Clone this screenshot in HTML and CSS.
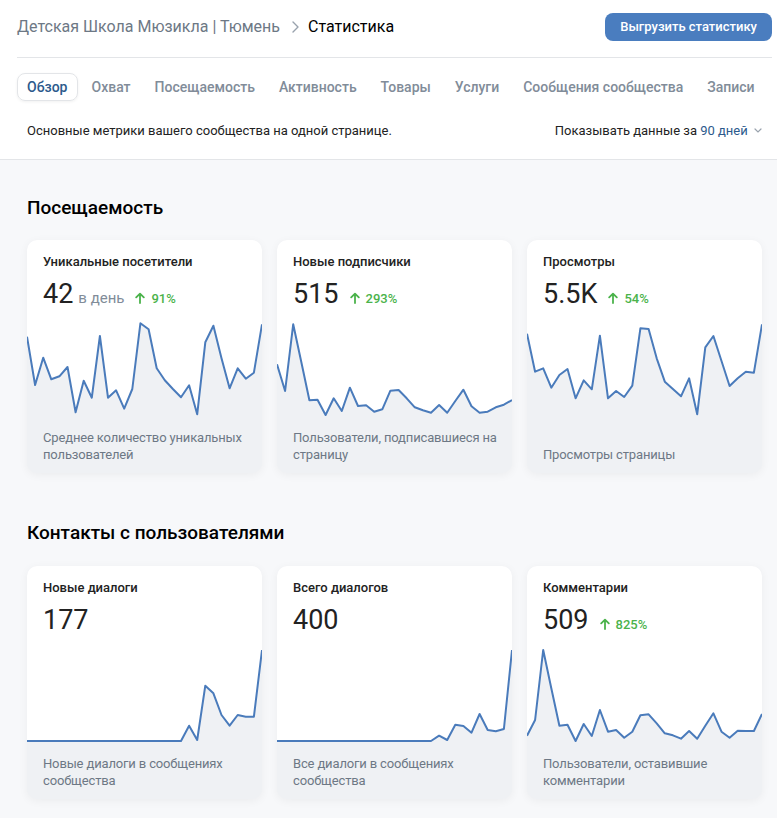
FILE: index.html
```html
<!DOCTYPE html>
<html>
	<head>
		<meta charset="utf-8">
		<title>Статистика</title>
		<link rel="stylesheet" href="styles.css">
	</head>
	<body>
		<div class="top">
			<div class="crumbs">
				<div class="path">
					<span class="group">Детская Школа Мюзикла | Тюмень</span>
					<svg class="sep" width="7" height="12" viewBox="0 0 7 12"><path d="M1 1l5 5-5 5" fill="none" stroke="#99a2ad" stroke-width="1.4" stroke-linecap="round" stroke-linejoin="round"/></svg>
					<span class="page">Статистика</span>
				</div>
				<a class="btn" href="#">Выгрузить статистику</a>
			</div>
			<ul class="tabs">
				<li class="on">Обзор</li>
				<li>Охват</li>
				<li>Посещаемость</li>
				<li>Активность</li>
				<li>Товары</li>
				<li>Услуги</li>
				<li>Сообщения сообщества</li>
				<li>Записи</li>
			</ul>
			<div class="about">
				<span>Основные метрики вашего сообщества на одной странице.</span>
				<span class="period">Показывать данные за <a href="#">90 дней</a>
					<svg width="8" height="5" viewBox="0 0 8 5"><path d="M1 1l3 3 3-3" fill="none" stroke="#99a2ad" stroke-width="1.2" stroke-linecap="round"/></svg>
				</span>
			</div>
		</div>

		<!--посещаемость-->
		<div class="section">
			<h2>Посещаемость</h2>
			<div class="cards">
				<div class="card">
					<div class="head">
						<div class="name">Уникальные посетители</div>
						<div class="value"><b>42</b><span class="unit">в день</span><span class="up">91%</span></div>
					</div>
					<svg class="chart" viewBox="0 0 235 115" data-v="26.7,75,47.7,69.3,66.3,57,102.3,70.7,87.7,26,87.7,80.3,98.7,79,13.3,19.3,58.3,70.3,79,87.3,75.3,104.3,32.3,15.7,48.3,78.3,58.3,68.7,62.7,14.3"></svg>
					<div class="desc">Среднее количество уникальных пользователей</div>
				</div>
				<div class="card">
					<div class="head">
						<div class="name">Новые подписчики</div>
						<div class="value"><b>515</b><span class="up">293%</span></div>
					</div>
					<svg class="chart" viewBox="0 0 235 115" data-v="54.3,81,14.3,52,90.3,89.7,105,88.3,101,77.7,96,95.3,101.7,99.3,80.7,80,88.3,97.3,100.3,102.7,95,102.7,91,79.7,96.3,102.7,101.7,97.3,94.7,90"></svg>
					<div class="desc">Пользователи, подписавшиеся на страницу</div>
				</div>
				<div class="card">
					<div class="head">
						<div class="name">Просмотры</div>
						<div class="value"><b>5.5K</b><span class="up">54%</span></div>
					</div>
					<svg class="chart" viewBox="0 0 235 115" data-v="23.7,61.7,58.3,77.7,65,59,88.3,70.3,79.3,25.7,88.3,81,87,75.7,18.3,19,48.3,71.7,79,86.3,68.3,104.3,37.3,26,51,76,68.3,61.7,62.7,14.3"></svg>
					<div class="desc">Просмотры страницы</div>
				</div>
			</div>
		</div>

		<!--контакты-->
		<div class="section">
			<h2>Контакты с пользователями</h2>
			<div class="cards">
				<div class="card">
					<div class="head">
						<div class="name">Новые диалоги</div>
						<div class="value"><b>177</b></div>
					</div>
					<svg class="chart" viewBox="0 0 235 115" data-v="105,105,105,105,105,105,105,105,105,105,105,105,105,105,105,105,105,105,105,105,89.7,104,49.7,57.3,79,89.7,79,80.7,80.7,14"></svg>
					<div class="desc">Новые диалоги в сообщениях сообщества</div>
				</div>
				<div class="card">
					<div class="head">
						<div class="name">Всего диалогов</div>
						<div class="value"><b>400</b></div>
					</div>
					<svg class="chart" viewBox="0 0 235 115" data-v="105,105,105,105,105,105,105,105,105,105,105,105,105,105,105,105,105,105,105,105,99.7,104,88.7,90,96.7,78,94,95.3,93,14"></svg>
					<div class="desc">Все диалоги в сообщениях сообщества</div>
				</div>
				<div class="card">
					<div class="head">
						<div class="name">Комментарии</div>
						<div class="value"><b>509</b><span class="up">825%</span></div>
					</div>
					<svg class="chart" viewBox="0 0 235 115" data-v="99.7,84,14,52.3,89.7,88.7,105,88,100,74,95.7,94,101.7,95.7,79.3,78.3,87.3,97.3,99.3,102.7,95,102.7,89.7,77.3,95.7,101.7,94.7,95,95,78"></svg>
					<div class="desc">Пользователи, оставившие комментарии</div>
				</div>
			</div>
		</div>

		<script>
		//рисуем графики
		var ns="http://www.w3.org/2000/svg";
		var charts=document.querySelectorAll(".chart");
		for(var i=0;i<charts.length;i++){
			var svg=charts[i];
			var vals=svg.getAttribute("data-v").split(",");
			var step=235/(vals.length-1);
			var pts=[];
			for(var j=0;j<vals.length;j++){
				pts.push((j*step).toFixed(1)+","+vals[j]);
			}
			//белая заливка над линией
			var fill=document.createElementNS(ns,"polygon");
			fill.setAttribute("points","0,0 "+pts.join(" ")+" 235,0");
			fill.setAttribute("fill","#fff");
			svg.appendChild(fill);
			var line=document.createElementNS(ns,"polyline");
			line.setAttribute("points",pts.join(" "));
			line.setAttribute("class","line");
			svg.appendChild(line);
		}
		//стрелки роста
		var ups=document.querySelectorAll(".up");
		for(var k=0;k<ups.length;k++){
			ups[k].innerHTML='<svg width="10" height="12" viewBox="0 0 10 12"><path d="M5 11V1.8M1.2 5.4L5 1.6l3.8 3.8" fill="none" stroke="#4bb34b" stroke-width="1.8" stroke-linecap="round" stroke-linejoin="round"/></svg>'+ups[k].innerHTML;
		}
		</script>
	</body>
</html>
```

FILE: styles.css
```css
  html,body{
	  margin: 0;
	  padding: 0;
  }
  body{
	  font-family: Roboto, "Noto Sans", "Liberation Sans", sans-serif;
	  background: #f7f8fa;
	  color: #000;
	  padding-bottom: 12px;
  }
  a{
	  text-decoration: none;
  }

  .top{
	  background: #fff;
	  border-bottom: #e3e5e8 solid 1px;
  }
  .crumbs{
	  margin: 0 5px 0 17px;
	  height: 57px;
	  border-bottom: #e3e5e8 solid 1px;
	  display: flex;
	  align-items: flex-start;
	  justify-content: space-between;
  }
  .path{
	  display: flex;
	  align-items: center;
	  font-size: 16px;
	  margin-top: 17px;
	  line-height: 20px;
  }
  .group{
	  color: #6d7885;
  }
  .sep{
	  margin: 0 9px 0 12px;
  }
  .btn{
	  margin-top: 13px;
	  height: 28px;
	  line-height: 28px;
	  padding: 0 15px;
	  border-radius: 8px;
	  background: #4a7dbf;
	  color: #fff;
	  font-size: 13px;
	  font-weight: 500;
  }

  .tabs{
	  list-style: none;
	  margin: 15px 0 0 17px;
	  padding: 0;
	  display: flex;
	  gap: 4px;
  }
  .tabs li{
	  height: 26px;
	  line-height: 26px;
	  padding: 0 9px;
	  border-radius: 8px;
	  font-size: 14px;
	  font-weight: 500;
	  color: #818c99;
	  border: transparent solid 1px;
	  white-space: nowrap;
  }
  .tabs li.on{
	  color: #2c5a8c;
	  border-color: #e3e5e8;
	  box-shadow: 0 1px 3px rgba(0,0,0,0.06);
  }

  .about{
	  display: flex;
	  justify-content: space-between;
	  align-items: center;
	  padding: 0 15px 0 27px;
	  height: 58px;
	  font-size: 13px;
	  color: #222;
  }
  .period a{
	  color: #2c5a8c;
  }
  .period svg{
	  margin-left: 3px;
	  vertical-align: 2px;
  }

  .section{
	  padding: 0 15px 0 27px;
  }
  .section h2{
	  margin: 0;
	  padding: 36px 0 20px;
	  font-size: 19px;
	  line-height: 24px;
	  font-weight: 500;
  }
  .section + .section h2{
	  padding-top: 48px;
	  padding-bottom: 21px;
  }
  .cards{
	  display: grid;
	  grid-template-columns: repeat(3, 235px);
	  gap: 15px;
  }
  .card{
	  height: 233px;
	  border-radius: 10px;
	  background: #eff1f4;
	  overflow: hidden;
	  display: flex;
	  flex-direction: column;
	  box-shadow: 0 2px 10px rgba(0,0,0,0.05);
  }
  .head{
	  background: #fff;
	  padding: 13px 16px 0;
  }
  .name{
	  font-size: 13px;
	  line-height: 17px;
	  font-weight: 500;
	  color: #222;
  }
  .value{
	  margin-top: 8px;
	  height: 32px;
	  line-height: 32px;
	  display: flex;
	  align-items: baseline;
  }
  .value b{
	  font-size: 27px;
	  font-weight: 400;
	  color: #222;
  }
  .unit{
	  font-size: 15px;
	  color: #818c99;
	  margin-left: 5px;
  }
  .up{
	  margin-left: 11px;
	  font-size: 13px;
	  font-weight: 500;
	  color: #4bb34b;
  }
  .up svg{
	  margin-right: 6px;
	  vertical-align: -1px;
  }
  .chart{
	  display: block;
	  width: 235px;
	  height: 115px;
	  flex: none;
  }
  .line{
	  fill: none;
	  stroke: #4a7bbb;
	  stroke-width: 2;
	  stroke-linejoin: round;
  }
  .desc{
	  margin-top: auto;
	  padding: 0 6px 10px 16px;
	  font-size: 13px;
	  line-height: 17px;
	  letter-spacing: -0.15px;
	  color: #6d7885;
  }
```
